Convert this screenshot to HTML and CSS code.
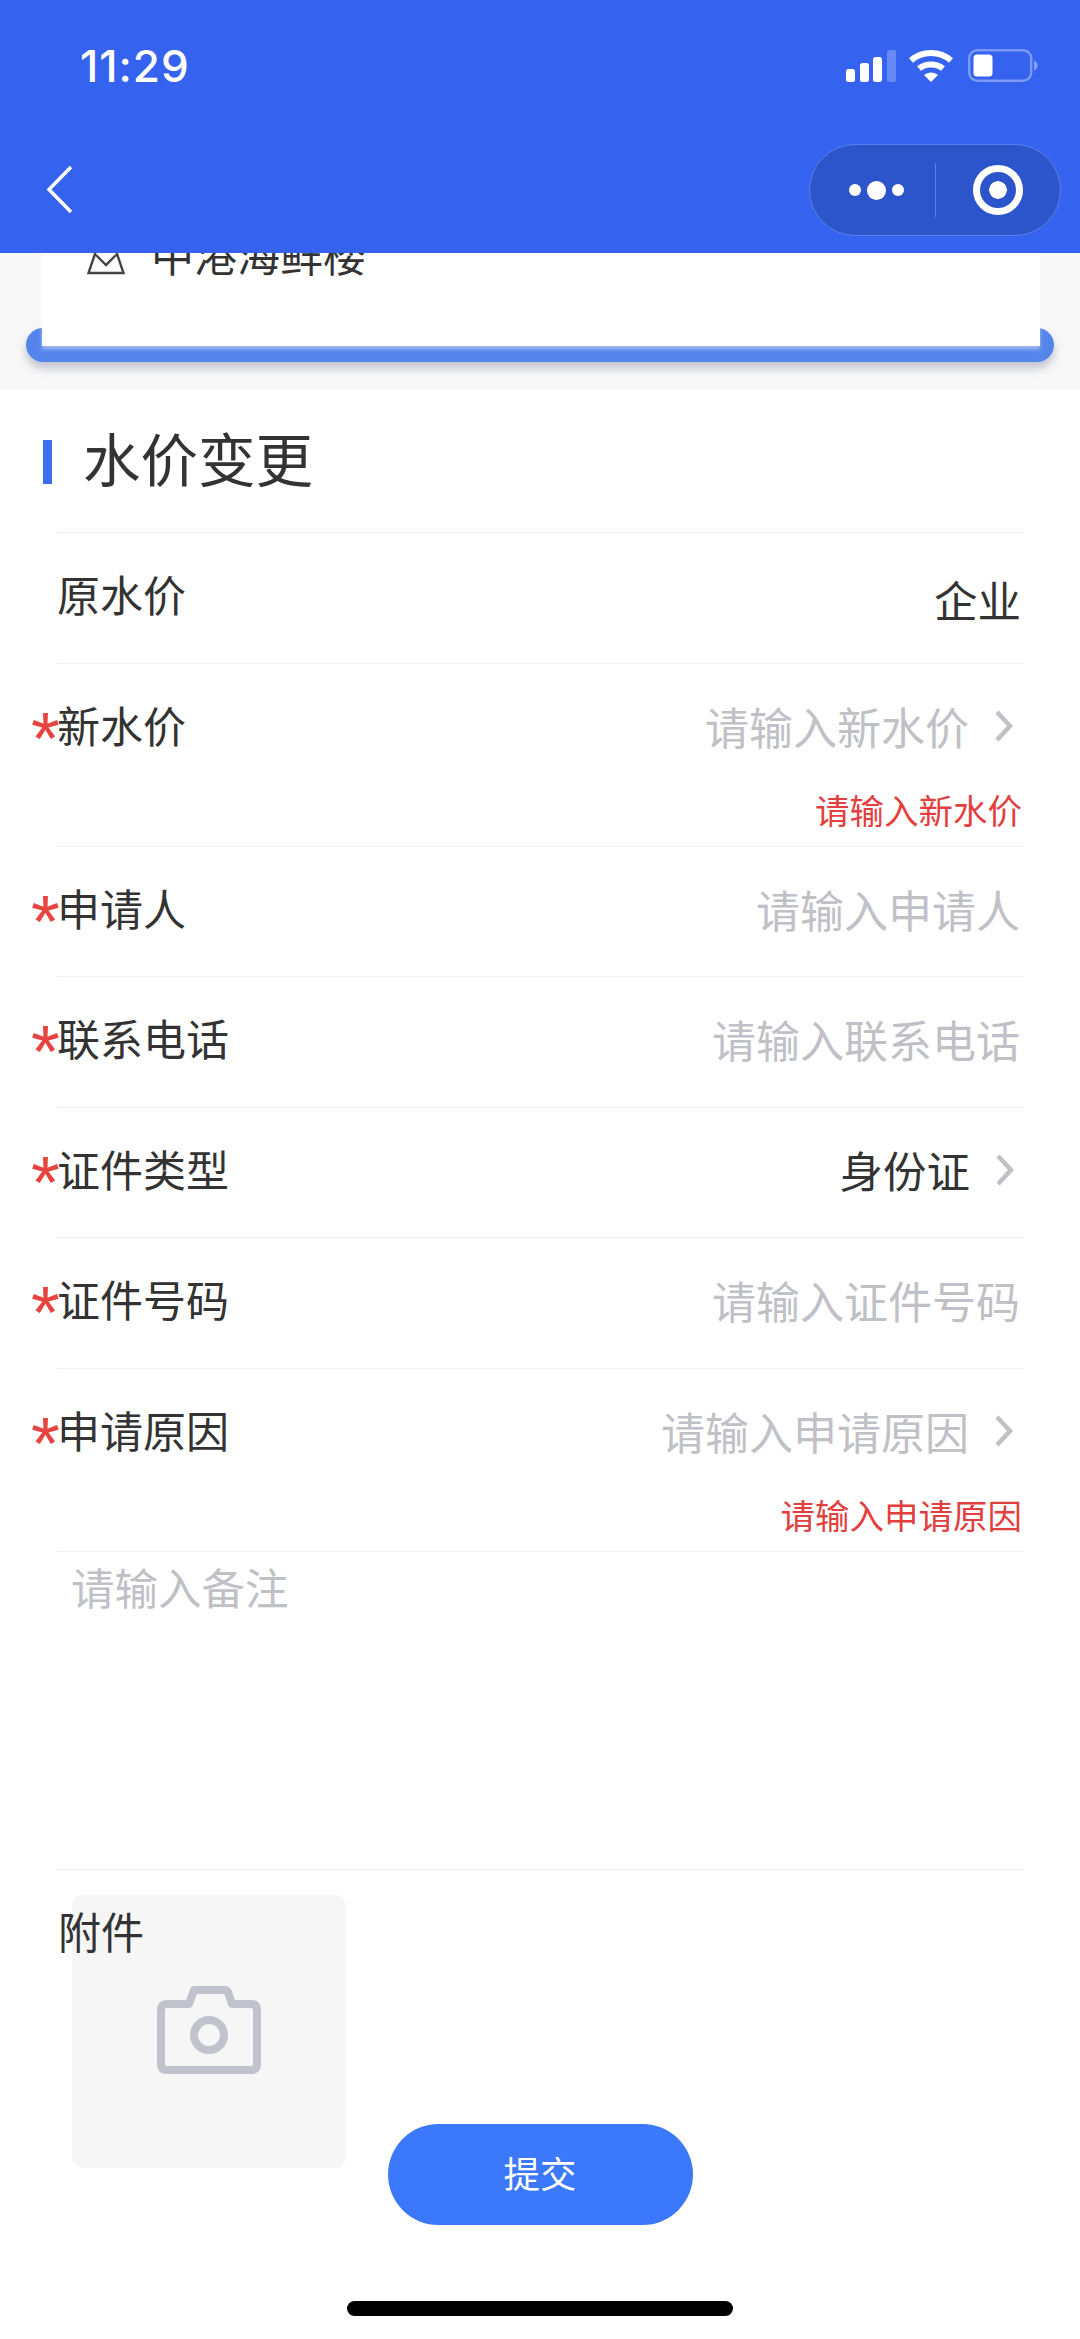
FILE: index.html
```html
<!DOCTYPE html>
<html lang="zh">
<head>
<meta charset="utf-8">
<title>水价变更</title>
<link rel="stylesheet" href="styles.css">
</head>
<body>
<div class="page">
  <header class="header">
    <div class="status">
      <span class="time">11:29</span>
      <div class="status-icons">
        <svg class="sig" width="50" height="32" viewBox="0 0 50 32"><rect x="0" y="19" width="9" height="13" rx="2.5" fill="#fff"/><rect x="14" y="13" width="9" height="19" rx="2.5" fill="#fff"/><rect x="27" y="7" width="9" height="25" rx="2.5" fill="#fff"/><rect x="41" y="0" width="9" height="32" rx="2.5" fill="#fff" opacity=".25"/></svg>
        <svg class="wifi" width="44" height="32" viewBox="0 0 44 32"><path d="M2 10.5C13 .5 31 .5 42 10.5" fill="none" stroke="#fff" stroke-width="6"/><path d="M10 18.5C16.500 13 27.500 13 34 18.500" fill="none" stroke="#fff" stroke-width="6"/><path d="M15 25C19 21.500 25 21.500 29 25L22 32Z" fill="#fff"/></svg>
        <svg class="batt" width="70" height="33" viewBox="0 0 70 33"><rect x="1.200" y="1.200" width="62" height="30.600" rx="8" fill="none" stroke="#fff" stroke-opacity=".35" stroke-width="2.400"/><rect x="5.500" y="5.500" width="19" height="22" rx="3.500" fill="#fff"/><path d="M66 11.500C68.500 12.500 69.500 14.500 69.500 16.500S68.500 20.500 66 21.500Z" fill="#fff" fill-opacity=".4"/></svg>
      </div>
    </div>
    <div class="nav">
      <svg class="back" width="28" height="50" viewBox="0 0 28 50"><path d="M25 2 3 24.500 25 47" fill="none" stroke="#fff" stroke-width="3.500"/></svg>
      <div class="capsule">
        <div class="cap-dots"><span class="dot"></span><span class="dot big"></span><span class="dot"></span></div>
        <span class="cap-line"></span>
        <span class="cap-ring"></span>
      </div>
    </div>
  </header>

  <section class="top-area">
    <div class="blue-bar"></div>
    <div class="card">
      <div class="card-row">
        <svg class="shop" width="38" height="44" viewBox="0 0 38 44"><path d="M11 14 1.500 42h35L27 14M9 24l10 10 10-10" fill="none" stroke="#444" stroke-width="2.400"/></svg>
        <span>中港海鲜楼</span>
      </div>
    </div>
  </section>

  <main class="panel">
    <h1 class="title">水价变更</h1>
    <div class="rows">
      <div class="row">
        <span class="label">原水价</span>
        <span class="value">企业</span>
      </div>
      <div class="row err">
        <span class="label req">新水价</span>
        <span class="value ph">请输入新水价<svg class="arrow" width="20" height="34" viewBox="0 0 20 34"><path d="M3 3 16 17 3 31" fill="none" stroke="#bfc1c6" stroke-width="4.500"/></svg></span>
        <span class="error">请输入新水价</span>
      </div>
      <div class="row">
        <span class="label req">申请人</span>
        <span class="value ph">请输入申请人</span>
      </div>
      <div class="row">
        <span class="label req">联系电话</span>
        <span class="value ph">请输入联系电话</span>
      </div>
      <div class="row">
        <span class="label req">证件类型</span>
        <span class="value type">身份证<svg class="arrow" width="20" height="34" viewBox="0 0 20 34"><path d="M3 3 16 17 3 31" fill="none" stroke="#bfc1c6" stroke-width="4.500"/></svg></span>
      </div>
      <div class="row">
        <span class="label req">证件号码</span>
        <span class="value ph">请输入证件号码</span>
      </div>
      <div class="row err">
        <span class="label req">申请原因</span>
        <span class="value ph">请输入申请原因<svg class="arrow" width="20" height="34" viewBox="0 0 20 34"><path d="M3 3 16 17 3 31" fill="none" stroke="#bfc1c6" stroke-width="4.500"/></svg></span>
        <span class="error">请输入申请原因</span>
      </div>
      <div class="note">请输入备注</div>
    </div>
    <div class="attach">
      <span class="attach-label">附件</span>
      <div class="upload">
        <svg width="104" height="88" viewBox="0 0 104 88"><path d="M32 18 37 4Q38 4 40 4H68Q70 4 71 6L75 18H94Q100 18 100 24V78Q100 84 94 84H10Q4 84 4 78V24Q4 18 10 18Z" fill="none" stroke="#c0c2cc" stroke-width="8" stroke-linejoin="round"/><circle cx="52" cy="49" r="15" fill="none" stroke="#c0c2cc" stroke-width="8"/></svg>
      </div>
    </div>
  </main>

  <button class="submit" type="button">提交</button>
  <div class="home"></div>
</div>
</body>
</html>
```

FILE: styles.css
```css
* { box-sizing: border-box; }
html, body { margin: 0; padding: 0; background: #fff; }
body { font-family: "Noto Sans CJK SC", "Noto Sans", sans-serif; color: #333; }
.page { position: relative; width: 1080px; height: 2339px; overflow: hidden; background: #fff; }

.header { position: relative; z-index: 2; height: 253px; background: #3563f0; display: flex; flex-direction: column; }
.status { height: 132px; display: flex; justify-content: space-between; align-items: flex-start; padding: 41px 42px 0 80px; }
.time { font-family: Inter, "Liberation Sans", sans-serif; font-size: 44px; font-weight: 500; line-height: 50px; letter-spacing: 1px; color: #fff; }
.status-icons { display: flex; align-items: flex-start; padding-top: 9px; }
.sig { margin-right: 13px; margin-top: 0; }
.wifi { margin-right: 15px; }
.batt { margin-right: 0; margin-top: -1px; }
.nav { flex: 1; display: flex; justify-content: space-between; align-items: flex-start; padding: 12px 19px 0 46px; }
.back { margin-top: 21px; }
.capsule { width: 252px; height: 92px; border-radius: 46px; background: #2c55cc; border: 1px solid #5b80e8; display: flex; align-items: center; }
.cap-dots { width: 125px; display: flex; justify-content: center; align-items: center; gap: 6px; padding-left: 7px; }
.dot { width: 12px; height: 12px; border-radius: 50%; background: #fff; }
.dot.big { width: 19px; height: 19px; }
.cap-line { width: 1px; height: 54px; background: #5b80e8; }
.cap-ring { width: 50px; height: 50px; margin-left: 37px; border-radius: 50%; border: 7px solid #fff; background: radial-gradient(circle, #fff 0 8.500px, transparent 9px); }

.top-area { position: relative; height: 137px; background: #f8f8f9; }
.blue-bar { position: absolute; left: 26px; top: 75px; width: 1028px; height: 34px; border-radius: 17px; background: #5585ea; box-shadow: 0 6px 10px rgba(60,70,110,.3); }
.card { position: absolute; left: 42px; top: 0; width: 998px; height: 93px; background: #fff; overflow: hidden; box-shadow: 0 3px 4px rgba(255,255,255,.45); }
.card-row { display: flex; align-items: center; gap: 26px; margin-top: -27px; padding-left: 45px; font-size: 43px; line-height: 54px; color: #333; }
.shop { flex: none; margin-top: -1px; }
.card-row span { display: block; }

.panel { position: relative; background: #fff; border-radius: 8px 8px 0 0; }
.title { position: relative; margin: 0; height: 142px; padding-left: 83px; font-size: 57.500px; font-weight: 400; line-height: 134px; color: #333; }
.title::before { content: ""; position: absolute; left: 43px; top: 50px; width: 9px; height: 44px; background: #3b6ff0; }
.rows { margin: 0 56px 0 57px; }
.row { position: relative; height: 130.500px; border-top: 1px solid #f0f0f2; display: flex; justify-content: space-between; align-items: flex-start; padding-top: 29px; }
.row.err { height: 183px; }
.label { position: relative; font-size: 43px; line-height: 62px; color: #333; }
.req::before { content: "*"; position: absolute; left: -26px; top: 13px; font-family: "Liberation Sans", sans-serif; font-size: 74px; line-height: 66px; color: #e8443f; }
.value { display: flex; align-items: center; font-size: 43.500px; line-height: 62px; margin-top: 7px; padding-right: 3px; color: #333; }
.value.ph { font-size: 44px; margin-top: 2px; padding-right: 4px; color: #bfc1c6; }
.value.type { margin-top: 2px; }
.arrow { margin-left: 25px; margin-right: 6px; }
.error { position: absolute; right: 2px; top: 121px; font-size: 34.500px; line-height: 48px; color: #e2403f; }
.note { height: 319px; border-top: 1px solid #f0f0f2; border-bottom: 1px solid #f0f0f2; padding: 4px 0 0 14px; font-size: 43.500px; line-height: 62px; color: #bfc1c6; }
.attach { position: relative; padding: 25px 0 0 72px; }
.attach-label { position: absolute; left: 58px; top: 29px; z-index: 1; font-size: 43px; line-height: 62px; color: #333; }
.upload { width: 274px; height: 273px; border-radius: 11px; background: #f6f6f7; display: flex; justify-content: center; align-items: center; padding-bottom: 3px; }

.submit { position: absolute; left: 388px; top: 2124px; width: 305px; height: 101px; border: 0; border-radius: 51px; background: #3b78fb; color: #fff; font-family: inherit; font-size: 36.500px; padding: 0 1px 5px 0; }
.home { position: absolute; left: 347px; top: 2301px; width: 386px; height: 15px; border-radius: 8px; background: #000; }
```
